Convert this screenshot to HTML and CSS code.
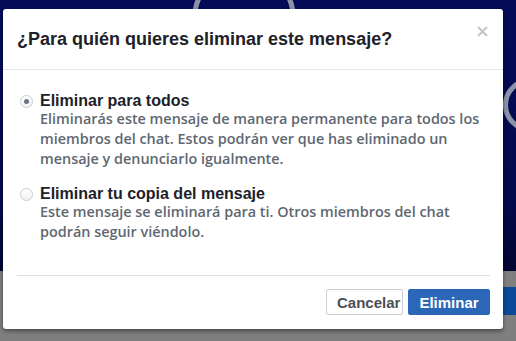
FILE: index.html
```
<!DOCTYPE html>
<html lang="es">
<head>
    <meta charset="UTF-8">
    <title>Eliminar mensaje</title>
    <link rel="stylesheet" href="styles.css">
</head>
<body>
<div class="backdrop">
    <div class="ring ring-top"></div>
    <div class="ring ring-side"></div>
    <div class="side-band"></div>
</div>

<div class="dialog" role="dialog">
    <div class="dialog-header">
        <h2 class="dialog-title">¿Para quién quieres eliminar este mensaje?</h2>
        <button class="close-btn" aria-label="Cerrar">
            <svg width="11" height="11" viewBox="0 0 11 11">
                <path d="M1 1 L10 10 M10 1 L1 10" stroke="#c4c7cc" stroke-width="2.2" fill="none"/>
            </svg>
        </button>
    </div>
    <form class="dialog-body" name="delete">
        <label class="option">
            <input class="radio" type="radio" name="scope" value="all" checked>
            <span class="option-text">
                <span class="option-title">Eliminar para todos</span>
                <span class="option-desc">Eliminarás este mensaje de manera permanente para todos los miembros del chat. Estos podrán ver que has eliminado un mensaje y denunciarlo igualmente.</span>
            </span>
        </label>
        <label class="option">
            <input class="radio" type="radio" name="scope" value="me">
            <span class="option-text">
                <span class="option-title">Eliminar tu copia del mensaje</span>
                <span class="option-desc">Este mensaje se eliminará para ti. Otros miembros del chat podrán seguir viéndolo.</span>
            </span>
        </label>
    </form>
    <div class="dialog-footer">
        <button class="btn btn-cancel">Cancelar</button>
        <button class="btn btn-primary">Eliminar</button>
    </div>
</div>
</body>
</html>
```

FILE: styles.css
```
html, body {
    margin: 0;
    height: 100%;
    overflow: hidden;
}

body {
    position: relative;
    background: linear-gradient(to bottom, #040c5a 0, #030a4c 200px, #020631 271px, #7f7f7f 271px);
    font-family: "Liberation Sans", Arial, sans-serif;
}

.backdrop {
    position: absolute;
    inset: 0;
    overflow: hidden;
}

.ring {
    position: absolute;
    border: 5px solid #8d93a6;
    border-radius: 50%;
}

.ring-top {
    left: 192px;
    top: -33px;
    width: 94px;
    height: 94px;
}

.ring-side {
    left: 503px;
    top: 78px;
    width: 44px;
    height: 44px;
}

.side-band {
    position: absolute;
    left: 490px;
    right: 0;
    top: 287px;
    height: 28px;
    background: #0b4a99;
}

.dialog {
    position: relative;
    width: 500px;
    margin: 9px 0 0 3px;
    background: #fff;
    border-radius: 3px;
    box-shadow: 0 2px 4px rgba(0, 0, 0, .45);
}

.dialog-header {
    display: flex;
    justify-content: space-between;
    height: 60px;
    padding: 0 15px 0 14px;
    border-bottom: 1px solid #e5e5e5;
}

.dialog-title {
    margin: 0;
    align-self: center;
    font-size: 18px;
    font-weight: bold;
    color: #1d2129;
}

.close-btn {
    margin-top: 17px;
    align-self: flex-start;
    padding: 0;
    border: 0;
    background: none;
    line-height: 0;
}

.dialog-body {
    display: flex;
    flex-direction: column;
    gap: 17px;
    margin: 0;
    padding: 23px 17px 33px 17px;
}

.option {
    display: flex;
    align-items: flex-start;
    gap: 7px;
}

.radio {
    appearance: none;
    flex: none;
    width: 13px;
    height: 13px;
    margin: 2px 0 0;
    border: 1px solid #c9ccd1;
    border-radius: 50%;
    background: linear-gradient(#fff, #f1f2f4);
    box-sizing: border-box;
    display: grid;
    place-items: center;
}

.radio:checked::after {
    content: "";
    width: 5px;
    height: 5px;
    border-radius: 50%;
    background: #6d7480;
}

.option-text {
    display: flex;
    flex-direction: column;
}

.option-title {
    font-size: 16px;
    line-height: 16px;
    font-weight: bold;
    color: #1d2129;
}

.option-desc {
    font-family: "Open Sans", sans-serif;
    font-size: 14.4px;
    font-weight: 600;
    line-height: 20px;
    color: #606770;
}

.dialog-footer {
    display: flex;
    justify-content: flex-end;
    gap: 5px;
    margin: 0 13px 0 14px;
    padding: 13px 0 14px;
    border-top: 1px solid #dddfe2;
}

.btn {
    height: 26px;
    padding: 0 10px;
    border-radius: 2px;
    font-family: "Liberation Sans", Arial, sans-serif;
    font-size: 15px;
    font-weight: bold;
}

.btn-cancel {
    width: 77px;
    border: 1px solid #ccd0d5;
    background: #fff;
    color: #4b4f56;
}

.btn-primary {
    width: 82px;
    border: 1px solid #2b67b8;
    background: #2b67b8;
    color: #fff;
}
```
